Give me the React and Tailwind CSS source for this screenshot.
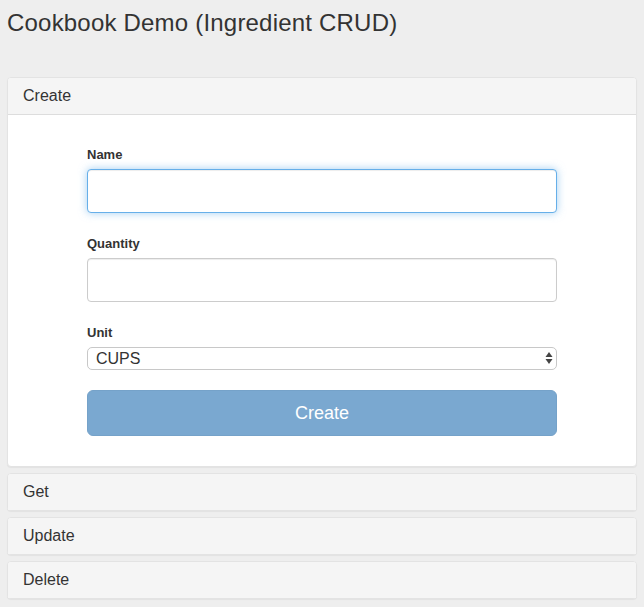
import React from 'react';

const font = { fontFamily: '"Liberation Sans", Arial, sans-serif' };

const Panel = ({ title, children }) => (
  <div className="bg-white border border-[#e3e3e3] rounded-[4px] shadow-[0_1px_1px_rgba(0,0,0,0.05)]">
    <div className="bg-[#f5f5f5] text-[#333] text-[16px] leading-[18px] px-[15px] py-[9px] rounded-t-[3px]">
      {title}
    </div>
    {children}
  </div>
);

const App = () => {
  return (
    <div className="min-h-screen bg-[#eeeeee] text-[#333] px-[7px]" style={font}>
      <h1 className="text-[24px] font-medium leading-[1.1] pt-[10px] m-0 tracking-[0.2px]">
        Cookbook Demo (Ingredient CRUD)
      </h1>

      <div className="mt-[41px] flex flex-col gap-[6px]">
        <Panel title="Create">
          <div className="border-t border-[#dddddd] px-[15px] pt-[31px] pb-[30px]">
            <div className="w-[470px] mx-auto">
              <label className="block text-[13px] leading-[18px] font-bold mb-[5px]">Name</label>
              <input
                type="text"
                className="block w-full h-[44px] px-[12px] text-[16px] bg-white border border-[#66afe9] rounded-[4px] outline-none shadow-[inset_0_1px_1px_rgba(0,0,0,0.075),0_0_8px_rgba(102,175,233,0.6)]"
              />

              <label className="block text-[13px] leading-[18px] font-bold mt-[22px] mb-[5px]">Quantity</label>
              <input
                type="text"
                className="block w-full h-[44px] px-[12px] text-[16px] bg-white border border-[#cccccc] rounded-[4px] outline-none shadow-[inset_0_1px_1px_rgba(0,0,0,0.075)]"
              />

              <label className="block text-[13px] leading-[18px] font-bold mt-[22px] mb-[5px]">Unit</label>
              <div className="relative">
                <select
                  defaultValue="CUPS"
                  className="block w-full h-[23px] pl-[8px] pr-[20px] text-[16px] leading-[21px] text-[#333] bg-white border border-[#c8c8c8] rounded-[5px] appearance-none outline-none"
                  style={font}
                >
                  <option>CUPS</option>
                  <option>GRAMS</option>
                  <option>OUNCES</option>
                </select>
                <svg
                  className="absolute right-[4px] top-[4px] pointer-events-none"
                  width="8"
                  height="14"
                  viewBox="0 0 8 14"
                >
                  <path d="M4 1 L7.5 6 L0.5 6 Z" fill="#444" />
                  <path d="M4 13 L7.5 8 L0.5 8 Z" fill="#444" />
                </svg>
              </div>

              <button
                type="button"
                disabled
                className="block w-full h-[46px] mt-[20px] text-[18px] text-white bg-[#7aa8d0] border border-[#75a2c9] rounded-[6px]"
              >
                Create
              </button>
            </div>
          </div>
        </Panel>
        <Panel title="Get" />
        <Panel title="Update" />
        <Panel title="Delete" />
      </div>
    </div>
  );
};

export default App;
